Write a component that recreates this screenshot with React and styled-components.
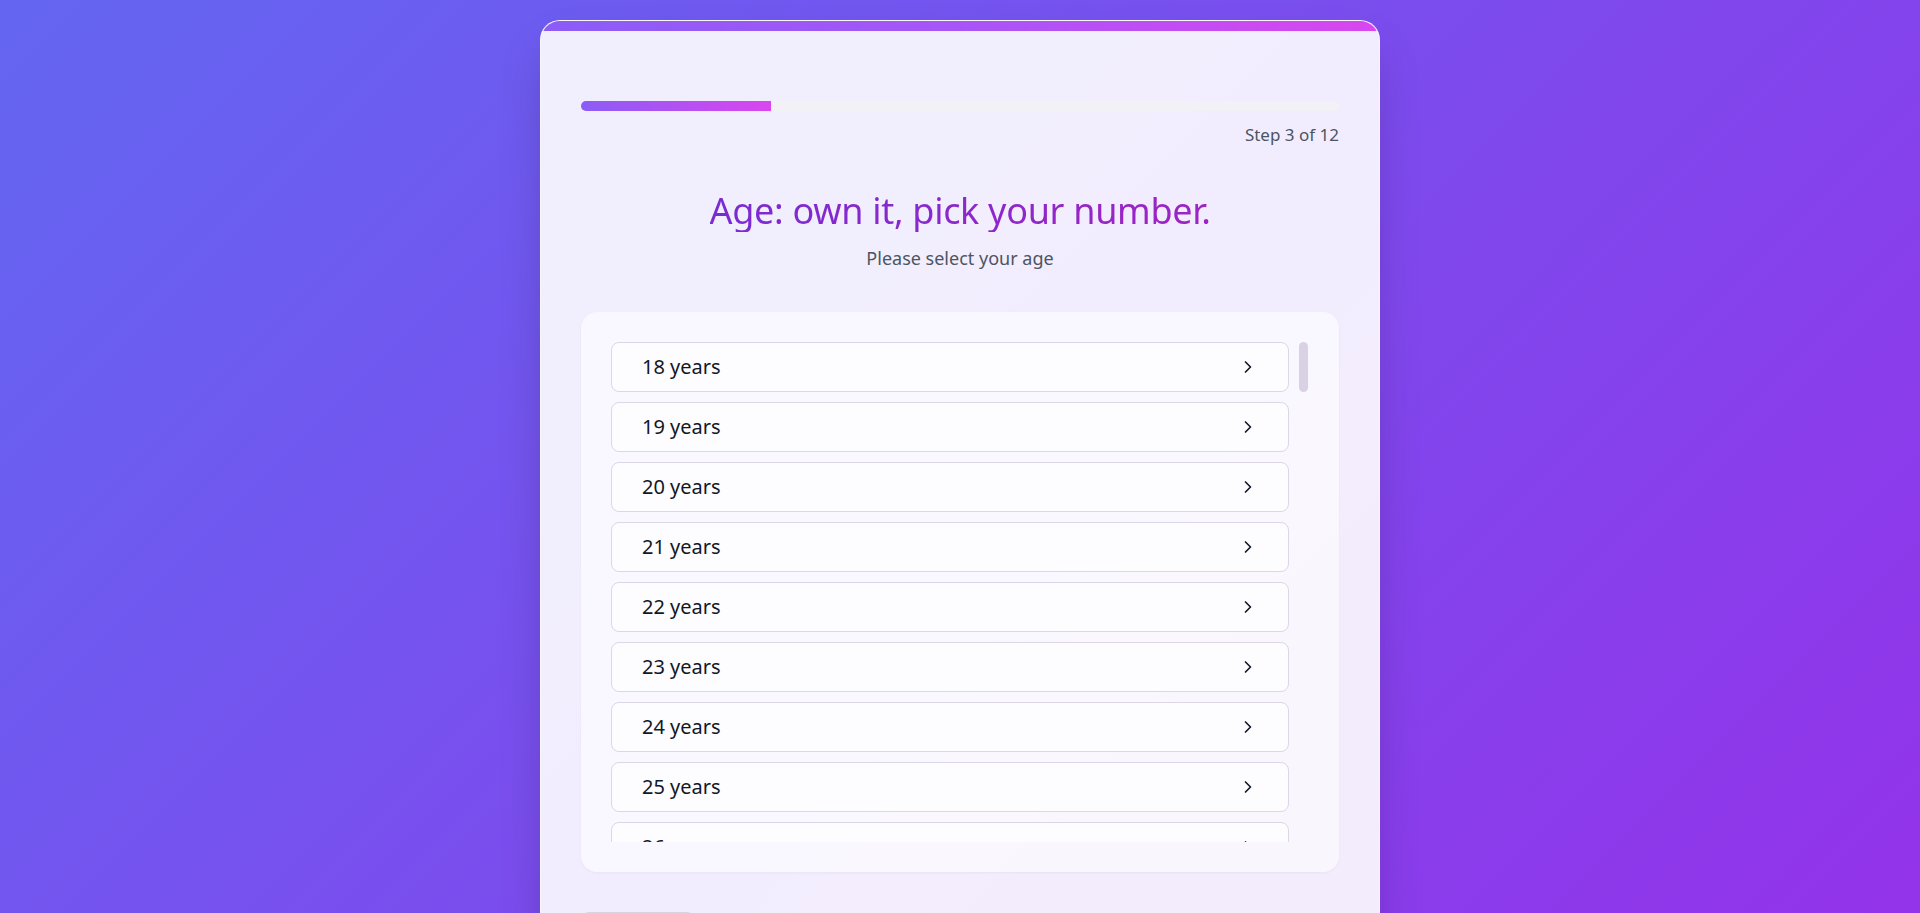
import styled, { createGlobalStyle } from "styled-components";
import { ChevronRight } from "lucide-react";

const GlobalStyle = createGlobalStyle`
  html, body {
    margin: 0;
    height: 100%;
    overflow: hidden;
  }

  body {
    font-family: "Noto Sans", "Open Sans", sans-serif;
    background: linear-gradient(135deg, #6366f1 0%, #9333ea 100%);
  }
`;

const Page = styled.div`
  display: flex;
  justify-content: center;
  align-items: flex-start;
  height: 100vh;
  padding-top: 20px;
  box-sizing: border-box;
`;

const Card = styled.div`
  width: 840px;
  box-sizing: border-box;
  background: rgba(255, 255, 255, 0.9);
  border: 1px solid rgba(255, 255, 255, 0.6);
  border-radius: 20px;
  overflow: hidden;
  box-shadow: 0 25px 50px -12px rgba(0, 0, 0, 0.25);
`;

const AccentBar = styled.div`
  height: 10px;
  background: linear-gradient(90deg, #8b5cf6 0%, #a855f7 50%, #d946ef 100%);
`;

const Body = styled.div`
  padding: 70px 40px 40px;
`;

const ProgressTrack = styled.div`
  height: 10px;
  background: #f2f2f6;
  border-radius: 5px;
  overflow: hidden;
`;

const ProgressFill = styled.div`
  height: 100%;
  background: linear-gradient(90deg, #8b5cf6 0%, #d946ef 100%);
`;

const StepLabel = styled.div`
  margin-top: 11px;
  text-align: right;
  font-size: 17px;
  line-height: 1.5;
  color: #4b5563;
`;

const Title = styled.h1`
  width: fit-content;
  margin: 41px auto 0;
  font-size: 36px;
  font-weight: 400;
  line-height: 1.2;
  letter-spacing: -0.3px;
  background: linear-gradient(90deg, #7a2bd2 0%, #9d24c2 100%);
  -webkit-background-clip: text;
  background-clip: text;
  color: transparent;
`;

const Subtitle = styled.p`
  margin: 13px 0 0;
  text-align: center;
  font-size: 18px;
  line-height: 1.5;
  color: #4b5563;
`;

const OptionsPanel = styled.div`
  margin-top: 40px;
  padding: 30px;
  background: rgba(255, 255, 255, 0.55);
  border-radius: 16px;
  box-shadow: 0 1px 3px rgba(60, 30, 120, 0.05);
`;

const ScrollFrame = styled.div`
  position: relative;
`;

const OptionsScroll = styled.div`
  height: 500px;
  overflow-y: auto;
  padding-right: 20px;
  display: grid;
  grid-auto-rows: 50px;
  gap: 10px;
  scrollbar-width: none;

  &::-webkit-scrollbar {
    display: none;
  }
`;

const ScrollThumb = styled.div`
  position: absolute;
  top: 0;
  right: 1px;
  width: 9px;
  border-radius: 5px;
  background: #d9d2e4;
`;

const Option = styled.button`
  display: flex;
  align-items: center;
  justify-content: space-between;
  box-sizing: border-box;
  height: 50px;
  padding: 0 30px;
  background: #fdfcff;
  border: 1px solid #ddd6e7;
  border-radius: 8px;
  font-family: inherit;
  font-size: 20px;
  color: #111827;
  text-align: left;
  cursor: pointer;

  svg {
    color: #111827;
    flex-shrink: 0;
  }
`;

const Footer = styled.div`
  margin-top: 40px;
  display: flex;
  justify-content: space-between;
`;

const BackButton = styled.button`
  width: 114px;
  height: 46px;
  background: #ffffff;
  border: 1px solid #d8d2e2;
  border-radius: 8px;
  font-family: inherit;
  font-size: 16px;
  color: #374151;
`;

const ages = Array.from({ length: 83 }, (_, i) => i + 18);

const VIEW_HEIGHT = 500;
const ROW = 50;
const GAP = 10;

function App() {
  const step = 3;
  const total = 12;
  const contentHeight = ages.length * ROW + (ages.length - 1) * GAP;
  const thumbHeight = Math.round((VIEW_HEIGHT * VIEW_HEIGHT) / contentHeight);

  return (
    <>
      <GlobalStyle />
      <Page>
        <Card>
          <AccentBar />
          <Body>
            <ProgressTrack>
              <ProgressFill style={{ width: `${(step / total) * 100}%` }} />
            </ProgressTrack>
            <StepLabel>
              Step {step} of {total}
            </StepLabel>

            <Title>Age: own it, pick your number.</Title>
            <Subtitle>Please select your age</Subtitle>

            <OptionsPanel>
              <ScrollFrame>
                <OptionsScroll>
                  {ages.map((age) => (
                    <Option key={age}>
                      <span>{age} years</span>
                      <ChevronRight size={20} strokeWidth={2} />
                    </Option>
                  ))}
                </OptionsScroll>
                <ScrollThumb style={{ height: thumbHeight }} />
              </ScrollFrame>
            </OptionsPanel>

            <Footer>
              <BackButton>Back</BackButton>
            </Footer>
          </Body>
        </Card>
      </Page>
    </>
  );
}

export default App;
